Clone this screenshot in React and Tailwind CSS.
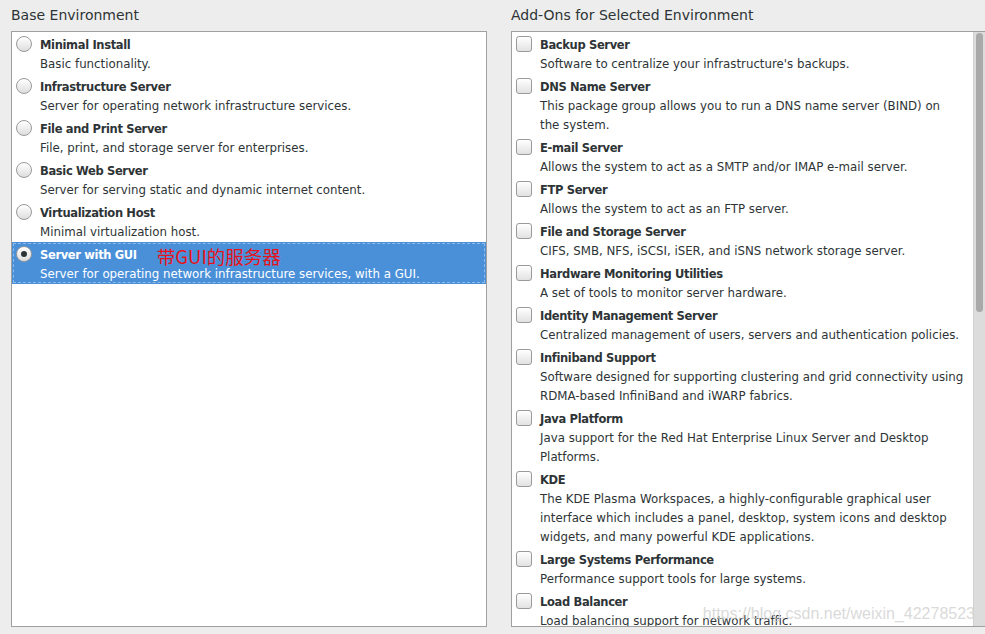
import React from "react";

const font = { fontFamily: '"DejaVu Sans", "Noto Sans", sans-serif' };

const baseEnv = [
  ["Minimal Install", "Basic functionality."],
  ["Infrastructure Server", "Server for operating network infrastructure services."],
  ["File and Print Server", "File, print, and storage server for enterprises."],
  ["Basic Web Server", "Server for serving static and dynamic internet content."],
  ["Virtualization Host", "Minimal virtualization host."],
];

const addons = [
  ["Backup Server", ["Software to centralize your infrastructure's backups."]],
  ["DNS Name Server", ["This package group allows you to run a DNS name server (BIND) on", "the system."]],
  ["E-mail Server", ["Allows the system to act as a SMTP and/or IMAP e-mail server."]],
  ["FTP Server", ["Allows the system to act as an FTP server."]],
  ["File and Storage Server", ["CIFS, SMB, NFS, iSCSI, iSER, and iSNS network storage server."]],
  ["Hardware Monitoring Utilities", ["A set of tools to monitor server hardware."]],
  ["Identity Management Server", ["Centralized management of users, servers and authentication policies."]],
  ["Infiniband Support", ["Software designed for supporting clustering and grid connectivity using", "RDMA-based InfiniBand and iWARP fabrics."]],
  ["Java Platform", ["Java support for the Red Hat Enterprise Linux Server and Desktop", "Platforms."]],
  ["KDE", ["The KDE Plasma Workspaces, a highly-configurable graphical user", "interface which includes a panel, desktop, system icons and desktop", "widgets, and many powerful KDE applications."]],
  ["Large Systems Performance", ["Performance support tools for large systems."]],
  ["Load Balancer", ["Load balancing support for network traffic."]],
];

function Radio({ checked }) {
  return (
    <div className="w-[16px] h-[16px] rounded-full border border-[#9a9a9a] bg-gradient-to-b from-[#ffffff] to-[#dedede] flex items-center justify-center shrink-0">
      {checked && <div className="w-[6px] h-[6px] rounded-full bg-[#2e3436]" />}
    </div>
  );
}

function Check() {
  return (
    <div className="w-[16px] h-[16px] rounded-[3px] border border-[#9a9a9a] bg-gradient-to-b from-[#ffffff] to-[#e2e2e2] shrink-0" />
  );
}

const titleCls = "font-bold whitespace-nowrap text-[11.5px] tracking-[-0.35px]";

export default function App() {
  return (
    <div
      className="w-[985px] h-[634px] bg-[#ededed] flex pl-[11px] gap-[24px] overflow-hidden text-[#2e3436]"
      style={font}
    >
      {/* Left column */}
      <div className="w-[476px] flex flex-col">
        <div className="h-[31px] flex items-center pb-[1px] text-[14px]">Base Environment</div>
        <div className="flex-1 mb-[7px] bg-white border border-[#a0a0a0] text-[11.8px] leading-[19px]">
          {baseEnv.map(([t, d]) => (
            <div key={t} className="h-[42px] pt-[4px] flex">
              <div className="w-[28px] pl-[4px] pt-[0px]">
                <Radio />
              </div>
              <div>
                <div className={titleCls}>{t}</div>
                <div className="whitespace-nowrap">{d}</div>
              </div>
            </div>
          ))}
          <div className="h-[42px] bg-[#4a90d9] p-[1px] text-white">
            <div className="h-full border border-dashed border-[#8fbbe8] flex pt-[2px]">
              <div className="w-[26px] pl-[2px] pt-[0px]">
                <Radio checked />
              </div>
              <div>
                <div className="flex items-center h-[19px]">
                  <span className={titleCls}>Server with GUI</span>
                  <span
                    className="ml-[20px] text-[18.5px] leading-[18px] text-[#e8121a]"
                    style={{ fontFamily: '"Noto Sans CJK SC", "Liberation Sans", sans-serif' }}
                  >
                    带GUI的服务器
                  </span>
                </div>
                <div className="whitespace-nowrap">Server for operating network infrastructure services, with a GUI.</div>
              </div>
            </div>
          </div>
        </div>
      </div>

      {/* Right column */}
      <div className="flex-1 flex flex-col">
        <div className="h-[31px] flex items-center pb-[1px] text-[14px]">Add-Ons for Selected Environment</div>
        <div className="relative flex-1 mb-[7px] bg-white border border-r-0 border-[#a0a0a0] flex overflow-hidden">
          <div className="flex-1 text-[11.8px] leading-[19px] overflow-hidden">
            {addons.map(([t, d]) => (
              <div key={t} className="pt-[4px] flex">
                <div className="w-[28px] pl-[4px] pt-[0px]">
                  <Check />
                </div>
                <div>
                  <div className={titleCls}>{t}</div>
                  {d.map((l) => (
                    <div key={l} className="whitespace-nowrap">{l}</div>
                  ))}
                </div>
              </div>
            ))}
          </div>
          <div className="w-[12px] bg-[#dcdcdc] border-l border-[#d2d2d2] pt-[1px] px-[2px]">
            <div className="h-[279px] rounded-full bg-[#a9a9a9]" />
          </div>
          <div
            className="absolute right-[10px] bottom-[0px] text-[16px] text-[#d0d0d0]/80 whitespace-nowrap"
            style={{ fontFamily: '"Liberation Sans", Arial, sans-serif' }}
          >
            https://blog.csdn.net/weixin_42278523
          </div>
        </div>
      </div>
    </div>
  );
}
